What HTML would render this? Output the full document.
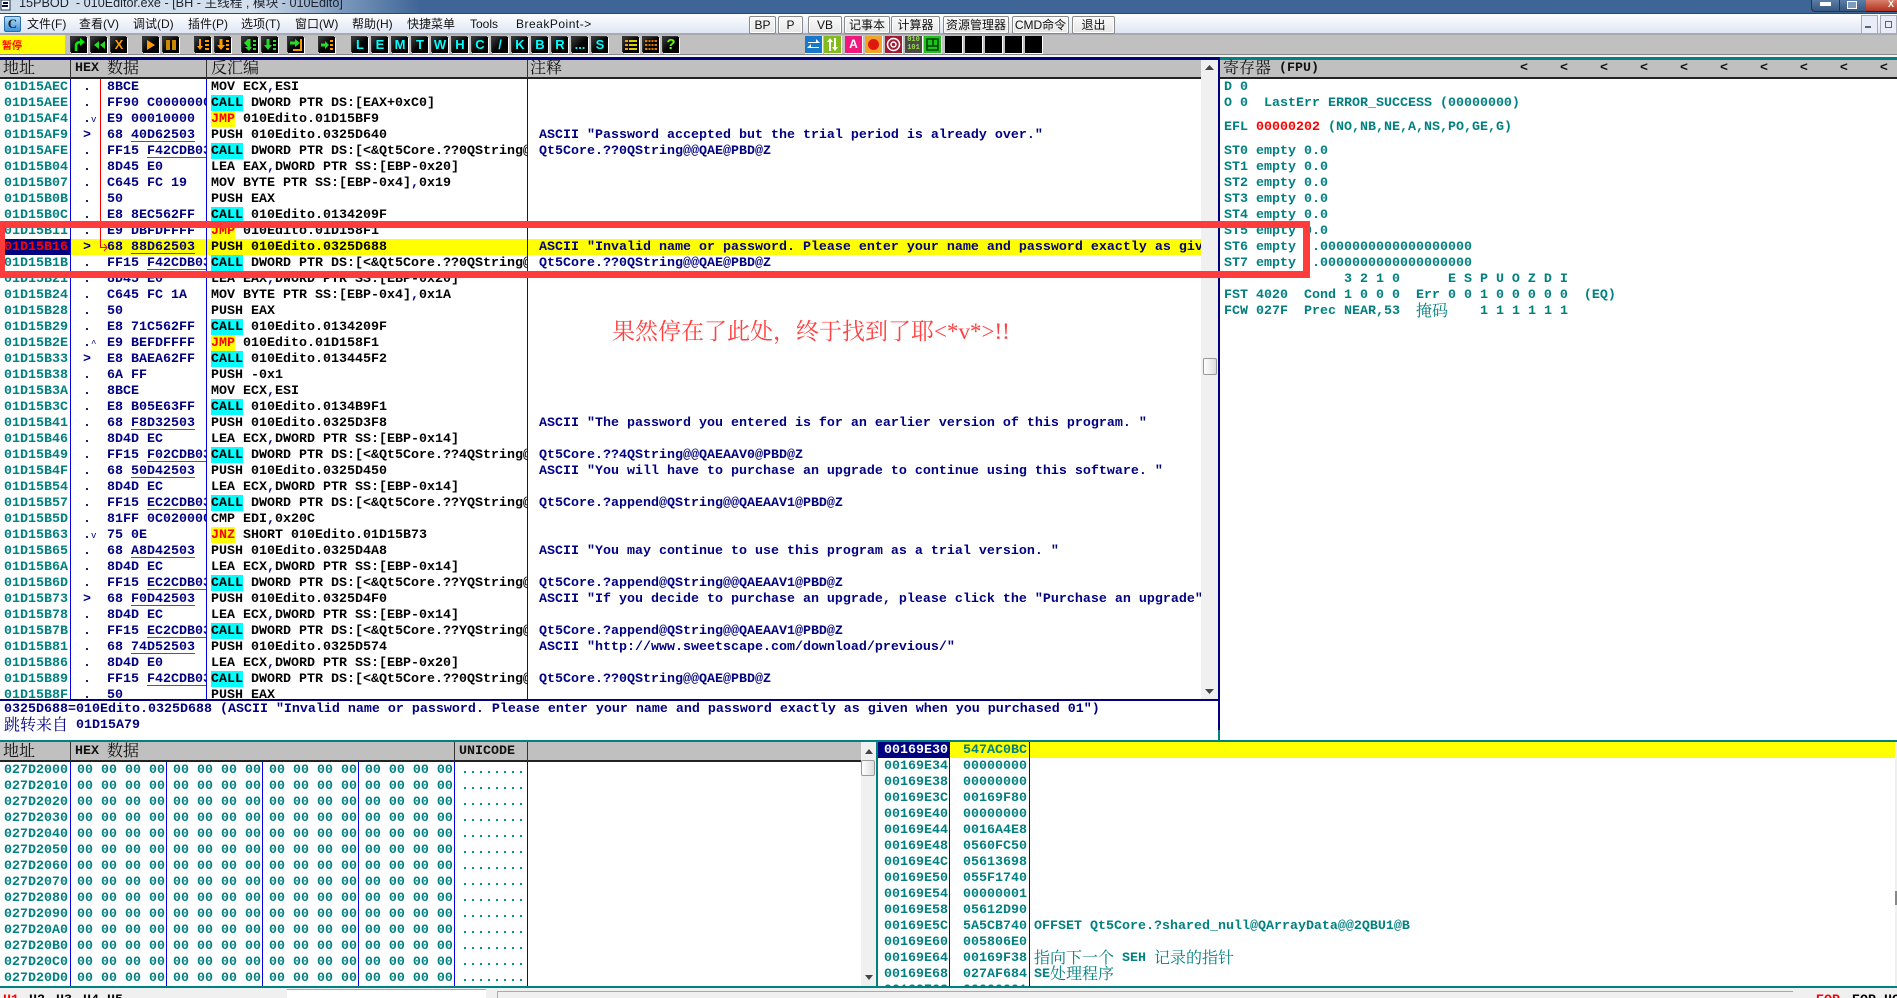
<!DOCTYPE html>
<html lang="zh"><head><meta charset="utf-8"><title>15PBOD - 010Editor.exe</title>
<style>
html,body{margin:0;padding:0}
body{position:relative;width:1897px;height:998px;overflow:hidden;background:#f0f0f0;font-family:"Liberation Sans","Noto Sans CJK SC",sans-serif}
div,pre,svg{position:absolute}
pre{margin:0;font:bold 13.333px/16px "Liberation Mono","Noto Sans CJK SC",monospace;white-space:pre;overflow:hidden}
pre.v{overflow:visible}
.z{font:normal 16px/0 "Noto Serif CJK SC","Noto Sans CJK SC",serif;position:relative;top:2px}
pre u{text-decoration:none;color:#000080}
pre em{font-style:normal;background:#0ff;padding-top:1px}
pre s{text-decoration:none;background:#ff0;color:#f00;padding-top:1px}
pre ins{text-decoration:none;background:linear-gradient(transparent 13px,#008080 13px,#008080 14px,transparent 14px)}
pre small{font-size:9px;font-weight:normal}
.hd{background:#c0c0c0;border-bottom:2px solid #222;height:17px}
.vs{background:#0000e0;width:1px}
.hs{background:#333;width:1px;top:60px;height:18px}
.m{top:17px;font-size:12px;line-height:15px;color:#111;white-space:pre}
.b{top:16px;height:16px;border:1px solid #8a8a8a;border-radius:2px;background:linear-gradient(#fafafa,#e6e6e6);box-shadow:inset 0 0 0 1px #fff;font-size:12px;line-height:16px;color:#111;text-align:center;white-space:nowrap}
.t{top:37px;width:16px;height:16px;background:linear-gradient(135deg,#3a3a3a,#000 55%);box-shadow:1px 1px 0 #fff,-1px -1px 0 #333;color:#0ff;font:bold 13px/16px "Liberation Sans",sans-serif;text-align:center;overflow:hidden}
.c{top:36px;width:17px;height:17px;border-right:1px solid #fff;border-bottom:1px solid #fff;text-align:center;font:bold 12px/17px "Liberation Sans",sans-serif;color:#fff;overflow:hidden}
.t svg,.c svg{left:0;top:0}
.r{background:#ff3b3b}
.sb{background:#f0f0f0}
.th{background:linear-gradient(90deg,#fff,#ddd);border:1px solid #999;border-radius:2px}
</style></head><body>

<!-- title bar -->
<div style="left:0;top:0;width:1897px;height:13px;background:linear-gradient(90deg,#cfdcea 0,#d4e0ec 250px,#7d9abd 340px,#3f6597 420px,#3d6596 1890px)"></div>
<div style="left:0;top:13px;width:1897px;height:1px;background:#2d4a6e"></div>
<svg style="left:0;top:0" width="12" height="12" viewBox="0 0 12 12"><rect x="1" y="0" width="9" height="10" fill="#fff" stroke="#234"/><path d="M2 6h6M3 3h5" stroke="#014" stroke-width="2"/></svg>
<div style="left:19px;top:-5px;font-size:12.65px;line-height:16px;color:#1b2430;white-space:pre">15PBOD  - 010Editor.exe - [BH - 主线程 , 模块 - 010Edito]</div>
<div style="left:1811px;top:0;width:28px;height:11px;background:linear-gradient(#5a7da6,#38577f);border:1px solid #24364f;border-top:0;border-radius:0 0 0 4px"></div>
<div style="left:1839px;top:0;width:27px;height:11px;background:linear-gradient(#5a7da6,#38577f);border:1px solid #24364f;border-top:0"></div>
<div style="left:1866px;top:0;width:31px;height:11px;background:linear-gradient(#d8806a,#b03020);border-bottom:1px solid #602"></div>
<div style="left:1820px;top:2px;width:11px;height:4px;background:#fff"></div>
<div style="left:1847px;top:1px;width:8px;height:6px;border:1px solid #fff;background:#7d9abd"></div>
<div style="left:1888px;top:0;font:bold 9px/8px 'Liberation Sans';color:#fff">X</div>

<!-- menu -->
<div style="left:0;top:14px;width:1897px;height:19px;background:linear-gradient(#fdfeff,#dfe6f4)"></div>
<div style="left:0;top:33px;width:1897px;height:2px;background:#a9a9b0"></div>
<div style="left:4px;top:16px;width:15px;height:14px;background:linear-gradient(#b7dcf6,#3f95d8);border:1px solid #2a6aa8;border-radius:2px;font:bold 13px/14px 'Liberation Serif',serif;color:#123;text-align:center">C</div>
<div class="m" style="left:27px">文件(F)</div>
<div class="m" style="left:79px">查看(V)</div>
<div class="m" style="left:133px">调试(D)</div>
<div class="m" style="left:188px">插件(P)</div>
<div class="m" style="left:241px">选项(T)</div>
<div class="m" style="left:295px">窗口(W)</div>
<div class="m" style="left:352px">帮助(H)</div>
<div class="m" style="left:407px">快捷菜单</div>
<div class="m" style="left:470px">Tools</div>
<div class="m" style="left:516px;letter-spacing:.5px">BreakPoint-&gt;</div>

<div class="b" style="left:749px;width:25px">BP</div>
<div class="b" style="left:778px;width:23px">P</div>
<div class="b" style="left:808px;width:32px">VB</div>
<div class="b" style="left:844px;width:44px">记事本</div>
<div class="b" style="left:891px;width:47px">计算器</div>
<div class="b" style="left:943px;width:64px">资源管理器</div>
<div class="b" style="left:1012px;width:55px">CMD命令</div>
<div class="b" style="left:1072px;width:41px">退出</div>
<div style="left:1861px;top:15px;width:15px;height:17px;background:#e8edf7;border:1px solid #aab"></div>
<div style="left:1880px;top:15px;width:15px;height:17px;background:#e8edf7;border:1px solid #aab"></div>
<div style="left:1865px;top:26px;width:6px;height:2px;background:#567"></div>
<div style="left:1885px;top:21px;width:5px;height:5px;border:1px solid #567"></div>

<!-- toolbar -->
<div style="left:0;top:35px;width:1897px;height:19px;background:#c0c0c0"></div>
<div style="left:0;top:54px;width:1897px;height:1px;background:#888"></div>
<div style="left:0;top:55px;width:1897px;height:2px;background:#f4f4f4"></div>
<div style="left:0;top:35px;width:65px;height:19px;background:#ff0;color:#f00;font:bold 10px/19px 'Noto Sans CJK SC',sans-serif;padding-left:2px;box-sizing:border-box">暂停</div>

<div class="t" style="left:71px"><svg width="16" height="16"><path d="M5 14V9q0-4 5-4" fill="none" stroke="#0e0" stroke-width="2.5"/><path d="M9 1l5 4-5 4z" fill="#0e0"/></svg></div>
<div class="t" style="left:91px"><svg width="16" height="16"><path d="M8 4L3 8l5 4zM14 4L9 8l5 4z" fill="#2d2"/></svg></div>
<div class="t" style="left:111px;color:#f90">X</div>
<div class="t" style="left:143px"><svg width="16" height="16"><path d="M4 3l8 5-8 5z" fill="#f90"/></svg></div>
<div class="t" style="left:163px"><svg width="16" height="16"><path d="M3 3h4v10H3zM9 3h4v10H9z" fill="#c80"/></svg></div>
<div class="t" style="left:195px"><svg width="16" height="16"><path d="M5 2v9" stroke="#f90" stroke-width="2"/><path d="M2 9h6l-3 4z" fill="#f90"/><path d="M10 3h4v2h-4zM10 7h4v2h-4zM10 11h4v2h-4z" fill="#f90"/></svg></div>
<div class="t" style="left:215px"><svg width="16" height="16"><path d="M6 2v7" stroke="#f90" stroke-width="3"/><path d="M2 8h8l-4 5z" fill="#f90"/><path d="M11 3h3v2h-3zM11 7h3v2h-3zM11 11h3v2h-3z" fill="#f90"/></svg></div>
<div class="t" style="left:242px"><svg width="16" height="16"><path d="M7 2v10" stroke="#2d2" stroke-width="3"/><path d="M2 6l4-4v8zM3 10h7l-3 4z" fill="#2d2"/><path d="M11 3h3v2h-3zM11 7h3v2h-3zM11 11h3v2h-3z" fill="#2d2"/></svg></div>
<div class="t" style="left:262px"><svg width="16" height="16"><path d="M6 2v7" stroke="#2d2" stroke-width="3"/><path d="M2 8h8l-4 5z" fill="#2d2"/><path d="M11 3h3v2h-3zM11 7h3v2h-3zM11 11h3v2h-3z" fill="#2d2"/></svg></div>
<div class="t" style="left:288px"><svg width="16" height="16"><path d="M2 6h6" stroke="#2d2" stroke-width="3"/><path d="M7 2l5 4-5 4z" fill="#2d2"/><path d="M13 2v11H5" fill="none" stroke="#f90" stroke-width="2"/></svg></div>
<div class="t" style="left:319px"><svg width="16" height="16"><path d="M2 8h5" stroke="#2d2" stroke-width="3"/><path d="M6 4l4 4-4 4z" fill="#2d2"/><path d="M11 3h3v2h-3zM11 7h3v2h-3zM11 11h3v2h-3z" fill="#f90"/></svg></div>
<div class="t" style="left:352px">L</div>
<div class="t" style="left:372px">E</div>
<div class="t" style="left:392px">M</div>
<div class="t" style="left:412px">T</div>
<div class="t" style="left:432px">W</div>
<div class="t" style="left:452px">H</div>
<div class="t" style="left:472px">C</div>
<div class="t" style="left:492px">/</div>
<div class="t" style="left:512px">K</div>
<div class="t" style="left:532px">B</div>
<div class="t" style="left:552px">R</div>
<div class="t" style="left:572px">...</div>
<div class="t" style="left:592px">S</div>
<div class="t" style="left:623px"><svg width="16" height="16"><path d="M2 3h3v2H2zM2 7h3v2H2zM2 11h3v2H2z" fill="#f90"/><path d="M6 3h8v2H6zM6 7h8v2H6zM6 11h8v2H6z" fill="#dc0"/></svg></div>
<div class="t" style="left:643px"><svg width="16" height="16"><path d="M2 3h12v2H2zM2 7h12v2H2zM2 11h12v2H2z" fill="#d70"/><path d="M5 2v12M8 2v12M11 2v12" stroke="#000"/></svg></div>
<div class="t" style="left:663px;color:#6f0;font-size:15px">?</div>

<div class="c" style="left:805px;background:#1a78c8"><svg width="17" height="17"><path d="M3 6h8V3l4 4-4 0H3zM14 11H6V8l-4 4 4 0h8z" fill="#fff"/></svg></div>
<div class="c" style="left:824px;background:#82bc1c"><svg width="17" height="17"><path d="M5 15V6H3l3-4 3 4H7v9zM12 2v9h2l-3 4-3-4h2V2z" fill="#fff"/></svg></div>
<div class="c" style="left:845px;background:#f0187c">A</div>
<div class="c" style="left:865px;background:#f0a428"><svg width="17" height="17"><circle cx="8.500" cy="8.500" r="5.500" fill="#e01810"/></svg></div>
<div class="c" style="left:885px;background:#a01c34"><svg width="17" height="17"><circle cx="8.500" cy="8.500" r="6" fill="none" stroke="#fff" stroke-width="1.500"/><circle cx="8.500" cy="8.500" r="2.500" fill="none" stroke="#fff" stroke-width="1.500"/></svg></div>
<div class="c" style="left:905px;background:#4a4a4a;color:#9d4;font:bold 7px/8px 'Liberation Mono',monospace">010<br>101</div>
<div class="c" style="left:924px;background:#20c020"><svg width="17" height="17"><path d="M3 3h11v11H3zM3 10h11M9 10V3" fill="none" stroke="#040" stroke-width="1.500"/></svg></div>
<div class="c" style="left:945px;background:#000"></div>
<div class="c" style="left:965px;background:#000"></div>
<div class="c" style="left:985px;background:#000"></div>
<div class="c" style="left:1005px;background:#000"></div>
<div class="c" style="left:1025px;background:#000"></div>

<!-- pane frames -->
<div style="left:0;top:57px;width:1220px;height:3px;background:#000080"></div>
<div style="left:1220px;top:57px;width:677px;height:3px;background:#008080"></div>

<!-- CPU pane -->
<div style="left:0;top:79px;width:1201px;height:620px;background:#fff"></div>
<div class="hd" style="left:0;top:60px;width:1201px"></div>
<div class="hs" style="left:70px"></div><div class="hs" style="left:206px"></div><div class="hs" style="left:527px"></div>
<pre class="v" style="left:3px;top:61px;color:#111"><span class="z">地址</span></pre>
<pre class="v" style="left:75px;top:61px;color:#111">HEX <span class="z">数据</span></pre>
<pre class="v" style="left:211px;top:61px;color:#111"><span class="z">反汇编</span></pre>
<pre class="v" style="left:530px;top:61px;color:#111"><span class="z">注释</span></pre>

<div style="left:0;top:239px;width:70px;height:16px;background:#000080"></div>
<div style="left:71px;top:239px;width:1130px;height:16px;background:#ff0"></div>
<div class="vs" style="left:70px;top:79px;height:620px"></div>
<div class="vs" style="left:206px;top:79px;height:620px"></div>
<div class="vs" style="left:527px;top:79px;height:620px"></div>
<div style="left:100px;top:79px;width:1px;height:168px;background:#f00"></div>
<div style="left:100px;top:247px;width:6px;height:1px;background:#f00"></div>
<svg style="left:103px;top:244px" width="5" height="7"><path d="M1 0l3 3.500-3 3.500" fill="none" stroke="#f00"/></svg>

<pre style="left:4px;top:80px;width:66px;height:619px;color:#008080">01D15AEC
01D15AEE
01D15AF4
01D15AF9
01D15AFE
01D15B04
01D15B07
01D15B0B
01D15B0C
01D15B11
<span style="color:#f00">01D15B16</span>
01D15B1B
01D15B21
01D15B24
01D15B28
01D15B29
01D15B2E
01D15B33
01D15B38
01D15B3A
01D15B3C
01D15B41
01D15B46
01D15B49
01D15B4F
01D15B54
01D15B57
01D15B5D
01D15B63
01D15B65
01D15B6A
01D15B6D
01D15B73
01D15B78
01D15B7B
01D15B81
01D15B86
01D15B89
01D15B8F</pre>

<pre style="left:83px;top:80px;width:17px;height:619px;color:#000080">.
.
.<small>v</small>
&gt;
.
.
.
.
.
.
&gt;
.
.
.
.
.
.<small>^</small>
&gt;
.
.
.
.
.
.
.
.
.
.
.<small>v</small>
.
.
.
&gt;
.
.
.
.
.
.</pre>

<pre style="left:107px;top:80px;width:99px;height:619px;color:#000080">8BCE
FF90 C0000000
E9 00010000
68 <ins>40D62503</ins>
FF15 <ins>F42CDB03</ins>
8D45 E0
C645 FC 19
50
E8 8EC562FF
E9 DBFDFFFF
68 <ins>88D62503</ins>
FF15 <ins>F42CDB03</ins>
8D45 E0
C645 FC 1A
50
E8 71C562FF
E9 BEFDFFFF
E8 BAEA62FF
6A FF
8BCE
E8 B05E63FF
68 <ins>F8D32503</ins>
8D4D EC
FF15 <ins>F02CDB03</ins>
68 <ins>50D42503</ins>
8D4D EC
FF15 <ins>EC2CDB03</ins>
81FF 0C020000
75 0E
68 <ins>A8D42503</ins>
8D4D EC
FF15 <ins>EC2CDB03</ins>
68 <ins>F0D42503</ins>
8D4D EC
FF15 <ins>EC2CDB03</ins>
68 <ins>74D52503</ins>
8D4D E0
FF15 <ins>F42CDB03</ins>
50</pre>

<pre style="left:211px;top:80px;width:316px;height:619px;color:#000">MOV ECX<u>,</u>ESI
<em>CALL</em> DWORD PTR DS:[EAX+0xC0]
<s>JMP</s> 010Edito.01D15BF9
PUSH 010Edito.0325D640
<em>CALL</em> DWORD PTR DS:[&lt;&amp;Qt5Core.??0QString@@QAE@PBD@Z&gt;]
LEA EAX<u>,</u>DWORD PTR SS:[EBP-0x20]
MOV BYTE PTR SS:[EBP-0x4]<u>,</u>0x19
PUSH EAX
<em>CALL</em> 010Edito.0134209F
<s>JMP</s> 010Edito.01D158F1
PUSH 010Edito.0325D688
<em>CALL</em> DWORD PTR DS:[&lt;&amp;Qt5Core.??0QString@@QAE@PBD@Z&gt;]
LEA EAX<u>,</u>DWORD PTR SS:[EBP-0x20]
MOV BYTE PTR SS:[EBP-0x4]<u>,</u>0x1A
PUSH EAX
<em>CALL</em> 010Edito.0134209F
<s>JMP</s> 010Edito.01D158F1
<em>CALL</em> 010Edito.013445F2
PUSH -0x1
MOV ECX<u>,</u>ESI
<em>CALL</em> 010Edito.0134B9F1
PUSH 010Edito.0325D3F8
LEA ECX<u>,</u>DWORD PTR SS:[EBP-0x14]
<em>CALL</em> DWORD PTR DS:[&lt;&amp;Qt5Core.??4QString@@QAEAAV0@PBD@Z&gt;]
PUSH 010Edito.0325D450
LEA ECX<u>,</u>DWORD PTR SS:[EBP-0x14]
<em>CALL</em> DWORD PTR DS:[&lt;&amp;Qt5Core.??YQString@@QAEAAV0@PBD@Z&gt;]
CMP EDI<u>,</u>0x20C
<s>JNZ</s> SHORT 010Edito.01D15B73
PUSH 010Edito.0325D4A8
LEA ECX<u>,</u>DWORD PTR SS:[EBP-0x14]
<em>CALL</em> DWORD PTR DS:[&lt;&amp;Qt5Core.??YQString@@QAEAAV0@PBD@Z&gt;]
PUSH 010Edito.0325D4F0
LEA ECX<u>,</u>DWORD PTR SS:[EBP-0x14]
<em>CALL</em> DWORD PTR DS:[&lt;&amp;Qt5Core.??YQString@@QAEAAV0@PBD@Z&gt;]
PUSH 010Edito.0325D574
LEA ECX<u>,</u>DWORD PTR SS:[EBP-0x20]
<em>CALL</em> DWORD PTR DS:[&lt;&amp;Qt5Core.??0QString@@QAE@PBD@Z&gt;]
PUSH EAX</pre>

<pre style="left:539px;top:80px;width:662px;height:619px;color:#000080">



ASCII "Password accepted but the trial period is already over."
Qt5Core.??0QString@@QAE@PBD@Z





ASCII "Invalid name or password. Please enter your name and password exactly as given when"
Qt5Core.??0QString@@QAE@PBD@Z









ASCII "The password you entered is for an earlier version of this program. "

Qt5Core.??4QString@@QAEAAV0@PBD@Z
ASCII "You will have to purchase an upgrade to continue using this software. "

Qt5Core.?append@QString@@QAEAAV1@PBD@Z


ASCII "You may continue to use this program as a trial version. "

Qt5Core.?append@QString@@QAEAAV1@PBD@Z
ASCII "If you decide to purchase an upgrade, please click the "Purchase an upgrade" button"

Qt5Core.?append@QString@@QAEAAV1@PBD@Z
ASCII "http://www.sweetscape.com/download/previous/"

Qt5Core.??0QString@@QAE@PBD@Z</pre>

<div style="left:612px;top:317px;font:23px/30px 'Liberation Serif','Noto Serif CJK SC',serif;color:#ff4040;white-space:pre">果然停在了此处，终于找到了耶&lt;*v*&gt;!!</div>

<!-- CPU scrollbar -->
<div class="sb" style="left:1201px;top:60px;width:17px;height:639px"></div>
<svg style="left:1205px;top:65px" width="9" height="5"><path d="M0 5l4.500-5 4.500 5z" fill="#444"/></svg>
<svg style="left:1205px;top:689px" width="9" height="5"><path d="M0 0l4.500 5 4.500-5z" fill="#444"/></svg>
<div class="th" style="left:1203px;top:358px;width:12px;height:15px"></div>

<!-- info pane -->
<div style="left:0;top:699px;width:1220px;height:2px;background:#000080"></div>
<div style="left:0;top:701px;width:1219px;height:39px;background:#fff"></div>
<pre class="v" style="left:4px;top:702px;width:1210px;height:38px;color:#000080">0325D688=010Edito.0325D688 (ASCII "Invalid name or password. Please enter your name and password exactly as given when you purchased 01")
<span class="z">跳转来自</span> 01D15A79</pre>

<!-- registers -->
<div style="left:1218px;top:60px;width:2px;height:670px;background:#000080"></div>
<div style="left:1218px;top:730px;width:2px;height:10px;background:#008080"></div>
<div class="hd" style="left:1220px;top:60px;width:677px"></div>
<div style="left:1220px;top:79px;width:677px;height:661px;background:#fff"></div>
<pre class="v" style="left:1223px;top:61px;color:#111"><span class="z">寄存器</span> (FPU)</pre>
<pre class="v" style="left:1520px;top:61px;width:377px;color:#111">&lt;    &lt;    &lt;    &lt;    &lt;    &lt;    &lt;    &lt;    &lt;    &lt;</pre>
<pre style="left:1224px;top:80px;color:#008080">D 0
O 0  LastErr ERROR_SUCCESS (00000000)</pre>
<pre style="left:1224px;top:120px;color:#008080">EFL <span style="color:#f00">00000202</span> (NO,NB,NE,A,NS,PO,GE,G)</pre>
<pre class="v" style="left:1224px;top:144px;color:#008080">ST0 empty 0.0
ST1 empty 0.0
ST2 empty 0.0
ST3 empty 0.0
ST4 empty 0.0
ST5 empty 0.0
ST6 empty  .0000000000000000000
ST7 empty  .0000000000000000000
               3 2 1 0      E S P U O Z D I
FST 4020  Cond 1 0 0 0  Err 0 0 1 0 0 0 0 0  (EQ)
FCW 027F  Prec NEAR,53  <span class="z">掩码</span>    1 1 1 1 1 1</pre>

<!-- dump -->
<div style="left:0;top:740px;width:1897px;height:2px;background:#008080"></div>
<div style="left:0;top:762px;width:861px;height:224px;background:#fff"></div>
<div class="hd" style="left:0;top:742px;width:861px;height:18px"></div>
<div class="hs" style="left:70px;top:742px;height:19px"></div><div class="hs" style="left:454px;top:742px;height:19px"></div><div class="hs" style="left:527px;top:742px;height:19px"></div>
<pre class="v" style="left:3px;top:744px;color:#111"><span class="z">地址</span></pre>
<pre class="v" style="left:75px;top:744px;color:#111">HEX <span class="z">数据</span></pre>
<pre class="v" style="left:459px;top:744px;color:#111">UNICODE</pre>
<div class="vs" style="left:70px;top:762px;height:224px"></div>
<div class="vs" style="left:166px;top:762px;height:224px"></div>
<div class="vs" style="left:262px;top:762px;height:224px"></div>
<div class="vs" style="left:358px;top:762px;height:224px"></div>
<div class="vs" style="left:454px;top:762px;height:224px"></div>
<div class="vs" style="left:527px;top:762px;height:224px"></div>
<pre style="left:4px;top:763px;color:#008080">027D2000
027D2010
027D2020
027D2030
027D2040
027D2050
027D2060
027D2070
027D2080
027D2090
027D20A0
027D20B0
027D20C0
027D20D0</pre>
<pre style="left:77px;top:763px;color:#008080">00 00 00 00 00 00 00 00 00 00 00 00 00 00 00 00
00 00 00 00 00 00 00 00 00 00 00 00 00 00 00 00
00 00 00 00 00 00 00 00 00 00 00 00 00 00 00 00
00 00 00 00 00 00 00 00 00 00 00 00 00 00 00 00
00 00 00 00 00 00 00 00 00 00 00 00 00 00 00 00
00 00 00 00 00 00 00 00 00 00 00 00 00 00 00 00
00 00 00 00 00 00 00 00 00 00 00 00 00 00 00 00
00 00 00 00 00 00 00 00 00 00 00 00 00 00 00 00
00 00 00 00 00 00 00 00 00 00 00 00 00 00 00 00
00 00 00 00 00 00 00 00 00 00 00 00 00 00 00 00
00 00 00 00 00 00 00 00 00 00 00 00 00 00 00 00
00 00 00 00 00 00 00 00 00 00 00 00 00 00 00 00
00 00 00 00 00 00 00 00 00 00 00 00 00 00 00 00
00 00 00 00 00 00 00 00 00 00 00 00 00 00 00 00</pre>
<pre style="left:461px;top:763px;color:#008080">........
........
........
........
........
........
........
........
........
........
........
........
........
........</pre>
<div class="sb" style="left:861px;top:742px;width:15px;height:244px"></div>
<svg style="left:865px;top:749px" width="8" height="5"><path d="M0 5l4-5 4 5z" fill="#444"/></svg>
<svg style="left:865px;top:975px" width="8" height="5"><path d="M0 0l4 5 4-5z" fill="#444"/></svg>
<div class="th" style="left:861px;top:760px;width:12px;height:14px"></div>

<!-- stack -->
<div style="left:876px;top:742px;width:2px;height:244px;background:#008080"></div>
<div style="left:878px;top:742px;width:1017px;height:244px;background:#fff"></div>
<div style="left:878px;top:742px;width:71px;height:16px;background:#000080"></div>
<div style="left:950px;top:742px;width:947px;height:16px;background:#ff0"></div>
<div class="vs" style="left:949px;top:742px;height:244px"></div>
<div class="vs" style="left:1029px;top:742px;height:244px"></div>
<pre style="left:884px;top:743px;height:243px;color:#008080"><span style="color:#fff">00169E30</span>
00169E34
00169E38
00169E3C
00169E40
00169E44
00169E48
00169E4C
00169E50
00169E54
00169E58
00169E5C
00169E60
00169E64
00169E68
00169E6C</pre>
<pre style="left:963px;top:743px;height:243px;color:#008080">547AC0BC
00000000
00000000
00169F80
00000000
0016A4E8
0560FC50
05613698
055F1740
00000001
05612D90
5A5CB740
005806E0
00169F38
027AF684
00000001</pre>
<pre class="v" style="left:1034px;top:919px;color:#008080">OFFSET Qt5Core.?shared_null@QArrayData@@2QBU1@B

<span class="z">指向下一个</span> SEH <span class="z">记录的指针</span>
SE<span class="z">处理程序</span></pre>
<div class="sb" style="left:1895px;top:742px;width:2px;height:244px"></div>
<div style="left:1895px;top:891px;width:2px;height:14px;background:#888"></div>

<!-- status bar -->
<div style="left:0;top:986px;width:1897px;height:2px;background:#008080"></div>
<div style="left:287px;top:989px;width:199px;height:9px;background:#fff;border-top:1px solid #aaa;box-sizing:border-box"></div>
<div style="left:497px;top:991px;width:1296px;height:7px;border-top:1px solid #aaa;border-left:1px solid #aaa;box-sizing:border-box"></div>
<pre style="left:3px;top:993px;height:5px;color:#f00">H1</pre>
<pre style="left:29px;top:993px;height:5px;color:#000">H2</pre>
<pre style="left:56px;top:993px;height:5px;color:#000">H3</pre>
<pre style="left:83px;top:993px;height:5px;color:#000">H4</pre>
<pre style="left:107px;top:993px;height:5px;color:#000">H5</pre>
<pre style="left:1816px;top:993px;height:5px;color:#f00">EOP</pre>
<pre style="left:1852px;top:993px;height:5px;color:#000">EOP HC</pre>

<!-- red annotation box -->
<div class="r" style="left:0;top:221px;width:1310px;height:7px"></div>
<div class="r" style="left:0;top:271px;width:1310px;height:7px"></div>
<div class="r" style="left:0;top:221px;width:5px;height:57px"></div>
<div class="r" style="left:1303px;top:221px;width:7px;height:57px"></div>
</body></html>
